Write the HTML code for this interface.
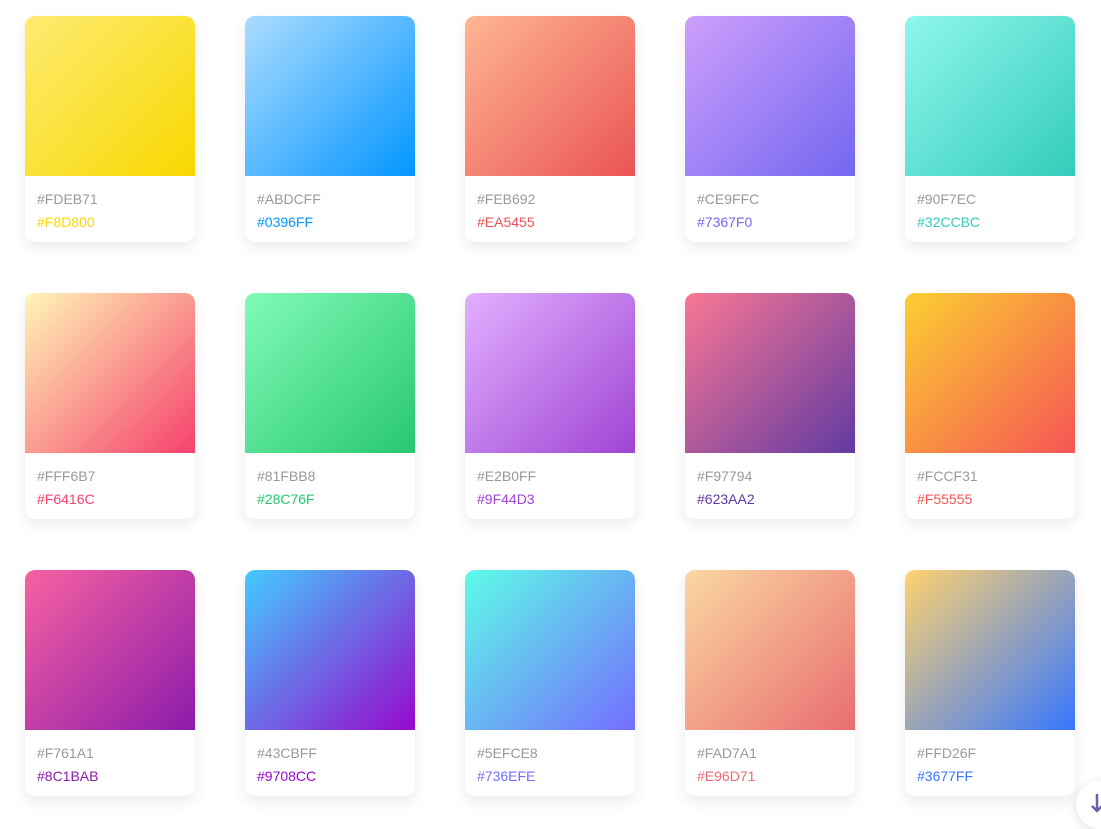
<!DOCTYPE html>
<html><head><meta charset="utf-8"><style>
html,body{margin:0;padding:0;background:#fff;width:1101px;height:824px;overflow:hidden;font-family:"Liberation Sans",sans-serif;}
.card{position:absolute;width:170px;height:226px;border-radius:10px;background:#fff;box-shadow:0 6px 14px rgba(0,0,0,0.08);overflow:hidden;}
.g{height:160px;}
.t{padding:12px 0 0 12px;font-size:14px;line-height:23px;}
.a{color:#999;}
.fab{position:absolute;left:1076px;top:781px;width:48px;height:48px;border-radius:50%;background:#fff;box-shadow:0 2px 10px rgba(0,0,0,0.12);}
</style></head><body>
<div class="card" style="left:25px;top:16px"><div class="g" style="background:linear-gradient(135deg,#FDEB71,#F8D800)"></div><div class="t"><div class="a">#FDEB71</div><div style="color:#F8D800">#F8D800</div></div></div>
<div class="card" style="left:245px;top:16px"><div class="g" style="background:linear-gradient(135deg,#ABDCFF,#0396FF)"></div><div class="t"><div class="a">#ABDCFF</div><div style="color:#0396FF">#0396FF</div></div></div>
<div class="card" style="left:465px;top:16px"><div class="g" style="background:linear-gradient(135deg,#FEB692,#EA5455)"></div><div class="t"><div class="a">#FEB692</div><div style="color:#EA5455">#EA5455</div></div></div>
<div class="card" style="left:685px;top:16px"><div class="g" style="background:linear-gradient(135deg,#CE9FFC,#7367F0)"></div><div class="t"><div class="a">#CE9FFC</div><div style="color:#7367F0">#7367F0</div></div></div>
<div class="card" style="left:905px;top:16px"><div class="g" style="background:linear-gradient(135deg,#90F7EC,#32CCBC)"></div><div class="t"><div class="a">#90F7EC</div><div style="color:#32CCBC">#32CCBC</div></div></div>

<div class="card" style="left:25px;top:293px"><div class="g" style="background:linear-gradient(135deg,#FFF6B7,#F6416C)"></div><div class="t"><div class="a">#FFF6B7</div><div style="color:#F6416C">#F6416C</div></div></div>
<div class="card" style="left:245px;top:293px"><div class="g" style="background:linear-gradient(135deg,#81FBB8,#28C76F)"></div><div class="t"><div class="a">#81FBB8</div><div style="color:#28C76F">#28C76F</div></div></div>
<div class="card" style="left:465px;top:293px"><div class="g" style="background:linear-gradient(135deg,#E2B0FF,#9F44D3)"></div><div class="t"><div class="a">#E2B0FF</div><div style="color:#9F44D3">#9F44D3</div></div></div>
<div class="card" style="left:685px;top:293px"><div class="g" style="background:linear-gradient(135deg,#F97794,#623AA2)"></div><div class="t"><div class="a">#F97794</div><div style="color:#623AA2">#623AA2</div></div></div>
<div class="card" style="left:905px;top:293px"><div class="g" style="background:linear-gradient(135deg,#FCCF31,#F55555)"></div><div class="t"><div class="a">#FCCF31</div><div style="color:#F55555">#F55555</div></div></div>

<div class="card" style="left:25px;top:570px"><div class="g" style="background:linear-gradient(135deg,#F761A1,#8C1BAB)"></div><div class="t"><div class="a">#F761A1</div><div style="color:#8C1BAB">#8C1BAB</div></div></div>
<div class="card" style="left:245px;top:570px"><div class="g" style="background:linear-gradient(135deg,#43CBFF,#9708CC)"></div><div class="t"><div class="a">#43CBFF</div><div style="color:#9708CC">#9708CC</div></div></div>
<div class="card" style="left:465px;top:570px"><div class="g" style="background:linear-gradient(135deg,#5EFCE8,#736EFE)"></div><div class="t"><div class="a">#5EFCE8</div><div style="color:#736EFE">#736EFE</div></div></div>
<div class="card" style="left:685px;top:570px"><div class="g" style="background:linear-gradient(135deg,#FAD7A1,#E96D71)"></div><div class="t"><div class="a">#FAD7A1</div><div style="color:#E96D71">#E96D71</div></div></div>
<div class="card" style="left:905px;top:570px"><div class="g" style="background:linear-gradient(135deg,#FFD26F,#3677FF)"></div><div class="t"><div class="a">#FFD26F</div><div style="color:#3677FF">#3677FF</div></div></div>

<div class="fab"><svg width="48" height="48" style="position:absolute;left:0;top:0"><path d="M21 13 V30 M16 25 L21 30 L26 25" stroke="#6b5ea8" stroke-width="2.5" fill="none"/></svg></div>
</body></html>
